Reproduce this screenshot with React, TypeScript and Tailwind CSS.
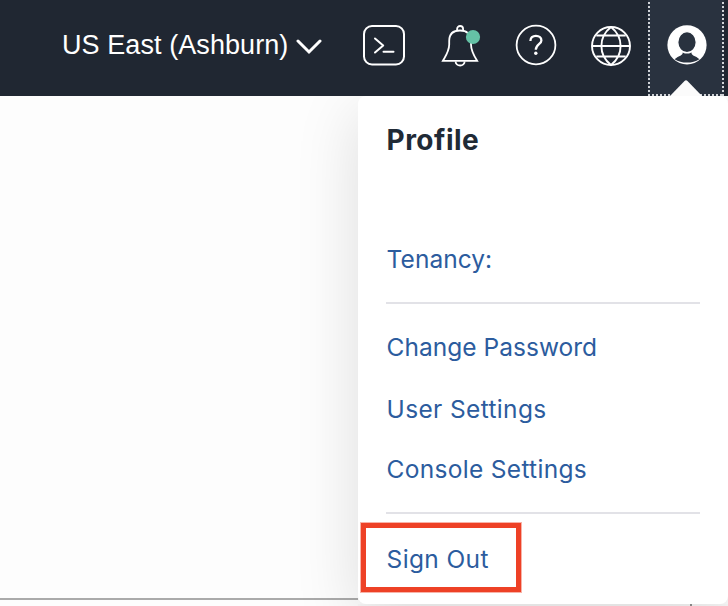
import React from "react";

const links = "text-[24.5px] leading-[30px] text-[#2c5c9e] whitespace-nowrap";

function Header() {
  return (
    <header className="relative z-20 flex h-24 w-full shrink-0 bg-[#202732] text-white">
      <div className="ml-[62px] flex h-[90px] w-[301px] items-center">
        <span className="w-[234px] whitespace-nowrap font-['Liberation_Sans',Arial,sans-serif] text-[27px] leading-none tracking-[0.08px]">
          US East (Ashburn)
        </span>
        <svg className="mt-1 h-[18px] w-[26px]" viewBox="0 0 26 18" fill="none" stroke="currentColor" strokeWidth="3">
          <path d="M2 3 L13 14 L24 3" strokeLinecap="round" />
        </svg>
      </div>
      <svg className="mt-6 h-[42px] w-[42px]" viewBox="0 0 42 42" fill="none" stroke="currentColor" strokeWidth="2">
        <rect x="1" y="2" width="40" height="38.5" rx="8" />
        <path d="M12 14.5 L20.2 21.5 L12 28.5 M20.5 27.8 H30.5" strokeLinecap="round" strokeLinejoin="round" />
      </svg>
      <svg className="ml-9 mt-6 h-[44px] w-[40px]" viewBox="0 0 40 44" fill="none" stroke="currentColor" strokeWidth="1.8">
        <path d="M1.9 36.8 C5 31.5 8.2 27 8.2 20.5 V17 C8.2 10 12.5 6.5 19 6.5 C25.5 6.5 30 10 30 17 V20.5 C30 27 32.8 31.5 36.1 36.8 Z" strokeLinejoin="miter" />
        <path d="M16.1 6.8 V5 A3 3 0 0 1 22.1 5 V6.8 M14.6 37.5 A4.5 4 0 0 0 23.6 37.5" />
        <circle cx="32" cy="13" r="7.1" fill="#65c2a6" stroke="none" />
      </svg>
      <svg className="ml-[34px] mt-6 h-[42px] w-[42px]" viewBox="0 0 42 42" fill="none" stroke="currentColor" strokeWidth="1.8">
        <circle cx="21" cy="21" r="19.4" />
        <path d="M15.4 16.9 C15.4 13.7 17.6 11.8 20.9 11.8 C24.2 11.8 26.4 13.7 26.4 16.4 C26.4 20.2 20.8 20.3 20.8 25.8" strokeWidth="2.3" />
        <circle cx="20.8" cy="29.3" r="1.7" fill="currentColor" stroke="none" />
      </svg>
      <svg className="ml-[33px] mt-6 h-[44px] w-[42px]" viewBox="0 0 42 44" fill="none" stroke="currentColor" strokeWidth="1.9">
        <circle cx="21" cy="22" r="19" />
        <path d="M21 3 C8.2 13 8.2 31 21 41 C33.8 31 33.8 13 21 3 M2 22 H40 M6.3 11.5 H35.7 M6.3 32.5 H35.7" />
      </svg>
      <div className="relative ml-4 flex h-24 w-[76px] shrink-0 justify-center bg-[#29323f]">
        <svg className="absolute inset-0 h-24 w-[76px]" viewBox="0 0 76 96" fill="none" stroke="#d0d3d7" strokeWidth="2" strokeDasharray="2 2">
          <path d="M1 2 V96 M75 2 V96 M0 95 H76" />
        </svg>
        <svg className="mt-6 h-[42px] w-[42px]" viewBox="0 0 42 42">
          <circle cx="22" cy="20.9" r="19.6" fill="white" />
          <path d="M9.6 35.2 Q12.5 32.6 15.8 31.4 Q18 30.6 18 27.5 H26.2 Q26.2 30.6 28.2 31.4 Q31.7 32.6 34.4 35.2 Q29 38.6 22 38.6 Q15 38.6 9.6 35.2 Z" fill="#29323f" />
          <ellipse cx="22" cy="18.2" rx="9.3" ry="10.6" fill="#29323f" stroke="white" strokeWidth="1.4" />
        </svg>
        <svg className="absolute bottom-0 left-[22px] h-4 w-8" viewBox="0 0 32 16">
          <path d="M0 16 L14.5 1 Q16 -.5 17.5 1 L32 16 Z" fill="#fbfbfb" />
        </svg>
      </div>
    </header>
  );
}

export default function App() {
  return (
    <div className="flex h-[606px] w-[728px] flex-col overflow-hidden bg-[#fdfdfd] font-['Inter',sans-serif]">
      <Header />
      <div className="flex h-[510px]">
        <div className="flex w-[358px] shrink-0 flex-col">
          <div className="h-[502px]" />
          <div className="h-[2px] bg-[#aaaaaa]" />
        </div>
        <div className="relative w-[370px] shrink-0">
          <section className="relative z-10 flex h-[508px] flex-col rounded-lg bg-white shadow-[0_16px_64px_rgba(0,0,0,0.13)]">
            <h1 className="ml-[28.5px] mt-[28px] text-[28px] font-bold leading-8 tracking-[0.5px] text-[#202a36]">Profile</h1>
            <a className={"ml-[28.6px] mt-[88px] tracking-[0.05px] " + links}>Tenancy:</a>
            <hr className="ml-7 mt-[28px] h-[2px] w-[314px] border-0 bg-[#e2e2e7]" />
            <a className={"ml-[28.6px] mt-[28px] tracking-[0.02px] " + links}>Change Password</a>
            <a className={"ml-[28.6px] mt-8 tracking-[0.36px] " + links}>User Settings</a>
            <a className={"ml-[28.6px] mt-[30px] tracking-[0.3px] " + links}>Console Settings</a>
            <hr className="ml-7 mt-[28px] h-[2px] w-[314px] border-0 bg-[#e2e2e7]" />
            <div className="ml-[3px] mt-[9px] flex h-[69px] w-[160px] items-center border-[5px] border-[#ee4126] pl-[20.6px] pt-[3px] shadow-[0_0_0_1px_rgba(238,65,38,0.4)]">
              <a className={"tracking-[0.36px] " + links}>Sign Out</a>
            </div>
          </section>
          <div className="h-[2px] bg-[#f9f9f9] pl-[332px]">
            <div className="h-[2px] w-[2px] bg-[#929292]" />
          </div>
        </div>
      </div>
    </div>
  );
}
